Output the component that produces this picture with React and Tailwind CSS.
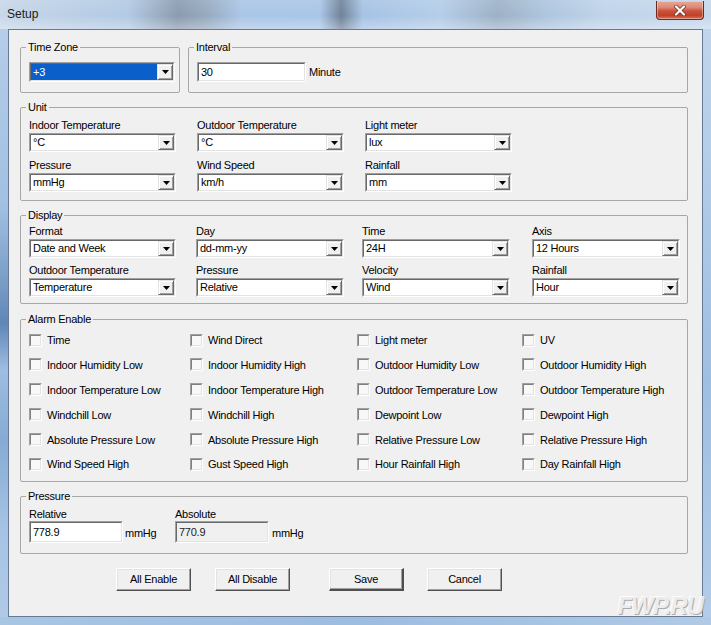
import React from "react";

const font = "font-['Liberation_Sans',Arial,sans-serif]";

function Sunken({ className = "", inner = "", children }) {
  return (
    <div className={`border border-t-[#a0a0a0] border-l-[#a0a0a0] border-r-white border-b-white ${className}`}>
      <div className={`h-full w-full border border-t-[#696969] border-l-[#696969] border-r-[#e3e3e3] border-b-[#e3e3e3] flex ${inner}`}>
        {children}
      </div>
    </div>
  );
}

function Arrow() {
  return (
    <div className="w-[16px] h-full shrink-0 bg-[#f0f0f0] border border-t-[#e3e3e3] border-l-[#e3e3e3] border-r-[#696969] border-b-[#696969] shadow-[inset_1px_1px_0_#ffffff,inset_-1px_-1px_0_#a0a0a0] flex items-center justify-center">
      <svg width="7" height="4" viewBox="0 0 7 4">
        <path d="M0 0H7L3.5 4Z" fill="#000" />
      </svg>
    </div>
  );
}

function Combo({ value, w = "w-[147px]", selected = false, h = "h-[19px]" }) {
  return (
    <Sunken className={`${h} ${w} bg-white`}>
      <div className={`flex-1 flex items-center pl-[2px] min-w-0 ${selected ? "bg-[#0b5fca] text-white" : ""}`}>
        <span className="leading-none whitespace-nowrap">{value}</span>
      </div>
      <Arrow />
    </Sunken>
  );
}

function Field({ label, value, w }) {
  return (
    <div className="flex flex-col">
      <span className="leading-[14px] h-[15px] whitespace-nowrap">{label}</span>
      <Combo value={value} w={w} />
    </div>
  );
}

function Group({ title, className = "", children }) {
  return (
    <fieldset className={`border border-[#a7a7a7] rounded-[2px] pl-[8px] ${className}`}>
      <legend className="ml-[-3px] px-[2px] leading-[14px]">{title}</legend>
      {children}
    </fieldset>
  );
}

function Check({ label }) {
  return (
    <div className="flex items-center">
      <div className="w-[13px] h-[13px] shrink-0 border border-t-[#a0a0a0] border-l-[#a0a0a0] border-r-white border-b-white">
        <div className="w-full h-full border border-t-[#808080] border-l-[#808080] border-r-[#e3e3e3] border-b-[#e3e3e3] bg-[#f8f8f8]" />
      </div>
      <span className="ml-[5px] whitespace-nowrap leading-[14px]">{label}</span>
    </div>
  );
}

function Btn({ children, def = false }) {
  return (
    <div
      className={`w-[75px] h-[23px] flex items-center justify-center bg-[#f0f0f0] border border-t-white border-l-white border-r-[#505050] border-b-[#505050] shadow-[inset_-1px_-1px_0_#a0a0a0,inset_1px_1px_0_#e3e3e3] ${def ? "border-r-2 border-b-2 border-r-[#303030] border-b-[#303030]" : ""}`}
    >
      {children}
    </div>
  );
}

const alarms = [
  ["Time", "Wind Direct", "Light meter", "UV"],
  ["Indoor Humidity Low", "Indoor Humidity High", "Outdoor Humidity Low", "Outdoor Humidity High"],
  ["Indoor Temperature Low", "Indoor Temperature High", "Outdoor Temperature Low", "Outdoor Temperature High"],
  ["Windchill Low", "Windchill High", "Dewpoint Low", "Dewpoint High"],
  ["Absolute Pressure Low", "Absolute Pressure High", "Relative Pressure Low", "Relative Pressure High"],
  ["Wind Speed High", "Gust Speed High", "Hour Rainfall High", "Day Rainfall High"],
];

function CloseBtn() {
  return (
    <div className="mr-[7px] mt-[1px] w-[48px] h-[19px] rounded-b-[4px] border border-[#6b2a20] border-t-0 bg-[linear-gradient(180deg,#e9a897_0%,#dc8a76_35%,#c9533b_55%,#c04028_80%,#d8765a_100%)] shadow-[inset_0_0_0_1px_rgba(255,255,255,0.35)] flex items-center justify-center">
      <svg width="12" height="11" viewBox="0 0 12 11">
        <path d="M2 1.5L10 9.5M10 1.5L2 9.5" stroke="#6a2b22" strokeWidth="3.6" strokeLinecap="round" />
        <path d="M2 1.5L10 9.5M10 1.5L2 9.5" stroke="#ffffff" strokeWidth="2.2" strokeLinecap="round" />
      </svg>
    </div>
  );
}

export default function App() {
  return (
    <div className={`w-[711px] h-[625px] flex flex-col relative overflow-hidden bg-[#a9c5e4] text-[11px] tracking-[-0.25px] text-black ${font}`}>
      {/* title bar */}
      <div className="h-[29px] shrink-0 flex items-start justify-between bg-[linear-gradient(180deg,rgba(255,255,255,0.1)_0%,rgba(255,255,255,0)_55%,rgba(255,255,255,0.3)_100%),linear-gradient(90deg,#c8d7e8_0%,#bdd0e6_8%,#b3cae4_18%,#8b9bb0_25%,#96aac0_29%,#aac6e6_34%,#a9c6e7_45%,#6f8298_48%,#a6c3e4_51%,#b4cde9_62%,#9db1c6_70%,#aec6df_77%,#c0d4ea_85%,#c6d8ec_100%)]">
        <span className="ml-[7px] mt-[7px] text-[12px] tracking-normal leading-[14px] text-[#1b1b1b]">Setup</span>
        <CloseBtn />
      </div>

      <div className="flex h-[588px] shrink-0">
        <div className="w-[8px] bg-[linear-gradient(180deg,#b4cde8_0%,#a2c0e1_30%,#7397c2_45%,#5f86b6_50%,#9ebde0_58%,#86abd4_70%,#a6c3e4_85%,#b0cae6_100%)]" />
        {/* client */}
        <div className="w-[695px] h-[588px] border border-[#667a93] bg-[#f0f0f0] flex flex-col pl-[11px] pt-[10px]">
          {/* row 1 */}
          <div className="flex gap-[8px]">
            <Group title="Time Zone" className="w-[160px] pt-[8px] pb-[10px] pl-[3px]">
              <Combo value="+3" w="w-[146px]" h="h-[20px]" selected />
            </Group>
            <Group title="Interval" className="w-[500px] pt-[8px] pb-[10px] pl-[7px]">
              <div className="flex items-center">
                <Sunken className="h-[20px] w-[109px] bg-white" inner="items-center pl-[2px]">
                  <span className="leading-none">30</span>
                </Sunken>
                <span className="ml-[3px] leading-none">Minute</span>
              </div>
            </Group>
          </div>

          {/* Unit */}
          <Group title="Unit" className="w-[668px] mt-[7px] pt-[4px] pb-[8px]">
            <div className="grid grid-cols-[168px_168px_168px] gap-y-[6px]">
              <Field label="Indoor Temperature" value="°C" />
              <Field label="Outdoor Temperature" value="°C" />
              <Field label="Light meter" value="lux" />
              <Field label="Pressure" value="mmHg" />
              <Field label="Wind Speed" value="km/h" />
              <Field label="Rainfall" value="mm" />
            </div>
          </Group>

          {/* Display */}
          <Group title="Display" className="w-[668px] mt-[7px] pt-[2px] pb-[6px]">
            <div className="grid grid-cols-[167px_166px_170px_148px] gap-y-[5px]">
              <Field label="Format" value="Date and Week" />
              <Field label="Day" value="dd-mm-yy" w="w-[148px]" />
              <Field label="Time" value="24H" w="w-[148px]" />
              <Field label="Axis" value="12 Hours" w="w-[148px]" />
              <Field label="Outdoor Temperature" value="Temperature" />
              <Field label="Pressure" value="Relative" w="w-[148px]" />
              <Field label="Velocity" value="Wind" w="w-[148px]" />
              <Field label="Rainfall" value="Hour" w="w-[148px]" />
            </div>
          </Group>

          {/* Alarm Enable */}
          <Group title="Alarm Enable" className="w-[668px] mt-[8px] pt-[2px] pb-[5px]">
            <div className="grid grid-cols-[161px_167px_165px_1fr] grid-rows-[24px_25px_25px_25px_25px_24px]">
              {alarms.flat().map((a) => (
                <Check key={a} label={a} />
              ))}
            </div>
          </Group>

          {/* Pressure */}
          <Group title="Pressure" className="w-[668px] mt-[7px] pt-[4px] pb-[10px]">
            <div className="flex">
              <div className="flex flex-col w-[146px]">
                <span className="leading-[14px]">Relative</span>
                <div className="flex items-center">
                  <Sunken className="h-[22px] w-[94px] bg-white" inner="items-center pl-[2px]">
                    <span className="leading-none">778.9</span>
                  </Sunken>
                  <span className="ml-[2px] mt-[3px] leading-none">mmHg</span>
                </div>
              </div>
              <div className="flex flex-col">
                <span className="leading-[14px]">Absolute</span>
                <div className="flex items-center">
                  <Sunken className="h-[22px] w-[94px] bg-[#f0f0f0]" inner="items-center pl-[2px]">
                    <span className="leading-none text-[#222]">770.9</span>
                  </Sunken>
                  <span className="ml-[3px] mt-[3px] leading-none">mmHg</span>
                </div>
              </div>
            </div>
          </Group>

          {/* Buttons */}
          <div className="flex mt-[14px] ml-[96px]">
            <Btn>All Enable</Btn>
            <div className="ml-[24px]">
              <Btn>All Disable</Btn>
            </div>
            <div className="ml-[39px]">
              <Btn def>Save</Btn>
            </div>
            <div className="ml-[23px]">
              <Btn>Cancel</Btn>
            </div>
          </div>
        </div>
        <div className="w-[8px] bg-[linear-gradient(180deg,#c0d5ec_0%,#a9c6e6_40%,#9fbfe2_60%,#b2cce9_100%)]" />
      </div>
      <div className="h-[8px] bg-[linear-gradient(90deg,#a9c5e4,#9cbce0_50%,#b0cae6)]" />

      {/* watermark */}
      <div className="absolute right-[8px] bottom-[7px] italic font-bold text-[24px] tracking-[-1px] leading-none text-[#ececec] [text-shadow:1px_1px_0_#a5a5a5,-1px_-1px_0_#ffffff] opacity-90">
        FWP.RU
      </div>
    </div>
  );
}
